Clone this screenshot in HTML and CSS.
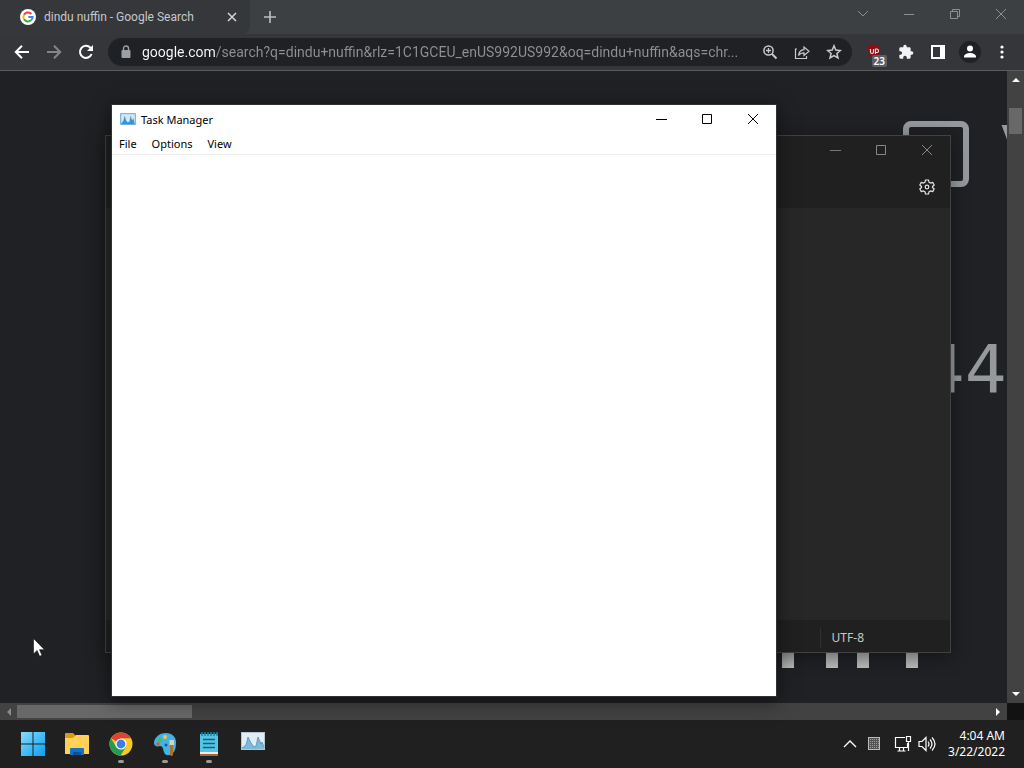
FILE: index.html
```html
<!DOCTYPE html>
<html lang="en">
<head>
<meta charset="utf-8">
<title>Desktop</title>
<link rel="stylesheet" href="styles.css">
</head>
<body>
<div class="desktop">
  <main class="browser">
    <header class="tabstrip">
      <div class="tab">
        <svg class="favicon" viewBox="0 0 48 48"><circle cx="24" cy="24" r="24" fill="#fff"/><g fill="none" stroke-width="6"><path d="M34 15A14 14 0 0 0 12 17" stroke="#ea4335"/><path d="M12 17A14 14 0 0 0 12 31" stroke="#fbbc05"/><path d="M12 31A14 14 0 0 0 33 34" stroke="#34a853"/><path d="M33 34A14 14 0 0 0 38 24H25" stroke="#4285f4"/></g></svg>
        <span class="tab-title">dindu nuffin - Google Search</span>
        <button class="icon-btn tab-close" aria-label="Close tab"><svg width="10" height="10" viewBox="0 0 10 10"><path d="M1 1l8 8M9 1L1 9" stroke="#d5d7d9" stroke-width="1.500"/></svg></button>
      </div>
      <button class="icon-btn new-tab" aria-label="New tab"><svg width="12" height="12" viewBox="0 0 12 12"><path d="M6 0v12M0 6h12" stroke="#bcbfc2" stroke-width="1.600"/></svg></button>
      <div class="caption caption-browser">
        <button class="icon-btn" aria-label="Search tabs"><svg width="12" height="12" viewBox="0 0 12 12"><path d="M1 3l5 5 5-5" fill="none" stroke="#8d9093"/></svg></button>
        <button class="icon-btn" aria-label="Minimize"><svg width="12" height="12" viewBox="0 0 12 12"><path d="M1 6.500h10" stroke="#8d9093"/></svg></button>
        <button class="icon-btn" aria-label="Restore"><svg width="12" height="12" viewBox="0 0 12 12"><path d="M1.500 3.500h7v7h-7zM3.500 3.500v-2h7v7h-2" fill="none" stroke="#8d9093"/></svg></button>
        <button class="icon-btn" aria-label="Close"><svg width="12" height="12" viewBox="0 0 12 12"><path d="M1 1l10 10M11 1L1 11" stroke="#8d9093"/></svg></button>
      </div>
    </header>
    <nav class="toolbar">
      <button class="icon-btn tool" aria-label="Back"><svg width="16" height="16" viewBox="0 0 16 16"><path d="M15 8H2M8 1.800L1.800 8 8 14.200" fill="none" stroke="#fff" stroke-width="2"/></svg></button>
      <button class="icon-btn tool" aria-label="Forward"><svg width="16" height="16" viewBox="0 0 16 16"><path d="M1 8h13M8 1.800L14.200 8 8 14.200" fill="none" stroke="#838588" stroke-width="2"/></svg></button>
      <button class="icon-btn tool" aria-label="Reload"><svg width="16" height="16" viewBox="0 0 16 16"><path d="M13.600 10A6 6 0 1 1 12.400 3.800L14 5.500" fill="none" stroke="#fff" stroke-width="2"/><path d="M15 1v6H9z" fill="#fff"/></svg></button>
      <div class="omnibox">
        <svg class="lock" width="10" height="14" viewBox="0 0 10 14"><path d="M2.500 6V3.500a2.500 2.500 0 0 1 5 0V6" fill="none" stroke="#9aa0a6" stroke-width="1.400"/><rect x="0.500" y="5" width="9" height="8" rx="1" fill="#9aa0a6"/></svg>
        <input class="url" type="text" aria-label="Address" value="google.com/search?q=dindu+nuffin&amp;rlz=1C1GCEU_enUS992US992&amp;oq=dindu+nuffin&amp;aqs=chr...">
        <button class="icon-btn omni" aria-label="Zoom"><svg width="16" height="16" viewBox="0 0 16 16"><circle cx="6.500" cy="6.500" r="4.600" fill="none" stroke="#c8cacd" stroke-width="1.500"/><path d="M10 10l4.500 4.500" stroke="#c8cacd" stroke-width="2"/><path d="M4 6.500h5M6.500 4v5" stroke="#c8cacd" stroke-width="1.300"/></svg></button>
        <button class="icon-btn omni" aria-label="Share"><svg width="16" height="16" viewBox="0 0 16 16"><path d="M3 5H1.500v9.500h11V12M4.500 11.500C5 8 7 6 10 5.700V3l5 4.200-5 4.200V8.800C7.500 8.700 6 9.500 4.500 11.500z" fill="none" stroke="#c8cacd" stroke-width="1.200"/></svg></button>
        <button class="icon-btn omni" aria-label="Bookmark"><svg width="16" height="16" viewBox="0 0 16 16"><path d="M8 1.800l1.800 4.300 4.600.4-3.500 3 1.100 4.500L8 11.600 4 14l1.100-4.500-3.500-3 4.600-.4z" fill="none" stroke="#c8cacd" stroke-width="1.500"/></svg></button>
      </div>
      <div class="extensions">
        <button class="icon-btn tool ext" aria-label="Content blocker"><svg width="14" height="16" viewBox="0 0 14 16"><path d="M7 0c2 1.500 4 2 6 2 .3 6-1 10-6 13C2 12 .7 8 1 2c2 0 4-.5 6-2z" fill="#8f0d10"/><path d="M3.500 5v3q0 1.500 1.500 1.500T6.500 8V5M8.500 10V5h1.200q1.800 0 1.800 1.800T9.700 8.500H8.500" fill="none" stroke="#ddd" stroke-width="1.200"/></svg><span class="badge">23</span></button>
        <button class="icon-btn tool" aria-label="Extensions"><svg width="16" height="16" viewBox="0 0 24 24"><path fill="#f1f3f4" d="M20.500 11H19V7a2 2 0 0 0-2-2h-4V3.500a2.500 2.500 0 0 0-5 0V5H4a2 2 0 0 0-2 2v3.800h1.500a2.700 2.700 0 0 1 0 5.400H2V20a2 2 0 0 0 2 2h3.800v-1.500a2.700 2.700 0 0 1 5.400 0V22H17a2 2 0 0 0 2-2v-4h1.500a2.500 2.500 0 0 0 0-5z"/></svg></button>
        <button class="icon-btn tool" aria-label="Side panel"><svg width="14" height="14" viewBox="0 0 14 14"><path d="M1 1h12v12H1z" fill="none" stroke="#fff" stroke-width="2"/><path d="M9 0h5v14H9z" fill="#fff"/></svg></button>
        <button class="icon-btn tool" aria-label="Profile"><svg width="22" height="22" viewBox="0 0 22 22"><circle cx="11" cy="11" r="11" fill="#202124"/><circle cx="11" cy="7.500" r="3" fill="#fff"/><path d="M5 16.500v-1c0-2 3.500-3.500 6-3.500s6 1.500 6 3.500v1z" fill="#fff"/></svg></button>
        <button class="icon-btn tool" aria-label="Menu"><svg width="4" height="14" viewBox="0 0 4 14" fill="#fff"><circle cx="2" cy="2" r="1.600"/><circle cx="2" cy="7" r="1.600"/><circle cx="2" cy="12" r="1.600"/></svg></button>
      </div>
    </nav>
    <section class="viewport">
      <div class="page">
        <div class="frame-shape"></div>
        <span class="big verify">V</span>
        <span class="big digits">44</span>
        <div class="stems"><i></i><i></i><i></i><i></i></div>
      </div>
      <div class="scroll-v"><svg width="8" height="4" viewBox="0 0 8 4"><path d="M0 4l4-4 4 4z" fill="#fff"/></svg><div class="thumb-v"></div><svg class="down" width="8" height="4" viewBox="0 0 8 4"><path d="M0 0l4 4 4-4z" fill="#fff"/></svg></div>
      <div class="scroll-h"><svg width="4" height="8" viewBox="0 0 4 8"><path d="M4 0L0 4l4 4z" fill="#8a8a8a"/></svg><div class="thumb-h"></div><svg class="right" width="4" height="8" viewBox="0 0 4 8"><path d="M0 0l4 4-4 4z" fill="#fff"/></svg></div>
      <div class="corner"></div>
    </section>
  </main>

  <section class="window notepad" aria-label="Notepad">
    <div class="notepad-head">
      <div class="caption">
        <button class="icon-btn" aria-label="Minimize"><svg width="12" height="12" viewBox="0 0 12 12"><path d="M1 6.500h11" stroke="#777"/></svg></button>
        <button class="icon-btn" aria-label="Maximize"><svg width="12" height="12" viewBox="0 0 12 12"><path d="M1.500 1.500h9v9h-9z" fill="none" stroke="#888"/></svg></button>
        <button class="icon-btn" aria-label="Close"><svg width="12" height="12" viewBox="0 0 12 12"><path d="M1 1l10 10M11 1L1 11" stroke="#888"/></svg></button>
      </div>
      <button class="icon-btn settings" aria-label="Settings"><svg width="16" height="16" viewBox="0 0 16 16" fill="none" stroke="#e4e4e4" stroke-width="1.200" stroke-linejoin="round"><path d="M6.500 1h3l.5 2.200 1.500.9 2.200-.7 1.500 2.600L13.500 7.500v1l1.700 1.500-1.500 2.600-2.200-.7-1.500.9L9.500 15h-3L6 12.800l-1.500-.9-2.200.7L.8 10l1.700-1.500v-1L.8 6l1.500-2.600 2.200.7L6 3.200z"/><circle cx="8" cy="8" r="1.800"/></svg></button>
    </div>
    <div class="notepad-text"></div>
    <footer class="notepad-status"><span>UTF-8</span></footer>
  </section>

  <section class="window taskmgr" aria-label="Task Manager">
    <header class="titlebar">
      <svg class="app-icon" width="16" height="12" viewBox="0 0 24 18"><rect x="1" y="1" width="22" height="16" fill="#cfe8fa" stroke="#6fa9d8" stroke-width="1.500"/><path d="M2 15l3-3 2-8 2 7 2 3 3-1 2-9 2 7 2-3 2 8v1H2z" fill="#3d92d3"/></svg>
      <h1>Task Manager</h1>
      <div class="caption">
        <button class="icon-btn" aria-label="Minimize"><svg width="12" height="12" viewBox="0 0 12 12"><path d="M1 6.500h11" stroke="#000"/></svg></button>
        <button class="icon-btn" aria-label="Maximize"><svg width="12" height="12" viewBox="0 0 12 12"><path d="M1.500 1.500h9v9h-9z" fill="none" stroke="#000"/></svg></button>
        <button class="icon-btn" aria-label="Close"><svg width="12" height="12" viewBox="0 0 12 12"><path d="M1 1l10 10M11 1L1 11" stroke="#000"/></svg></button>
      </div>
    </header>
    <nav class="menubar"><button>File</button><button>Options</button><button>View</button></nav>
  </section>

  <footer class="taskbar">
    <div class="apps">
      <button class="icon-btn app" aria-label="Start"><svg width="24" height="24" viewBox="0 0 24 24"><defs><linearGradient id="win" x1="0" y1="0" x2="1" y2="1"><stop offset="0" stop-color="#83dcff"/><stop offset="1" stop-color="#0c9fee"/></linearGradient></defs><path d="M0 0h11.500v11.500H0zM12.500 0H24v11.500H12.500zM0 12.500h11.500V24H0zM12.500 12.500H24V24H12.500z" fill="url(#win)"/></svg></button>
      <button class="icon-btn app" aria-label="File Explorer"><svg width="26" height="24" viewBox="0 0 26 24"><path d="M1 2q0-1 1-1h7l3 3v4H1z" fill="#dc9a13"/><path d="M1 6h8l3-3h12q1 0 1 1v18H1z" fill="#ffd257"/><path d="M6 23v-6q0-1 1-1h12q1 0 1 1v6z" fill="#1770c0"/><path d="M9 23v-3h8v3z" fill="#0b4f95"/></svg></button>
      <button class="icon-btn app running" aria-label="Chrome"><svg width="24" height="24" viewBox="0 0 24 24"><circle cx="12" cy="12" r="11.500" fill="#f8c920"/><path d="M12 12L2 6.300A11.500 11.500 0 0 1 22 6.300H12z" fill="#dc4437"/><path d="M2 6.300A11.500 11.500 0 0 0 11.500 23.500L17 14.800 12 12 7 14.800z" fill="#269b50"/><circle cx="12" cy="12" r="5.600" fill="#fff"/><circle cx="12" cy="12" r="4.400" fill="#3c7ee8"/></svg></button>
      <button class="icon-btn app running" aria-label="Paint"><svg width="24" height="24" viewBox="0 0 24 24"><path d="M13 1C6 1 1 6 1 11c0 3 3 4 6 3 3 0 3 3 4 6 1 4 5 4 8 2 4-3 4-9 4-12 0-5-4-9-10-9z" fill="#43b3e4"/><circle cx="12" cy="5" r="2" fill="#f3c545"/><circle cx="7" cy="8" r="2" fill="#53b947"/><circle cx="5" cy="12" r="1.800" fill="#dc563c"/><circle cx="13" cy="13" r="1.500" fill="#155c91"/><path d="M17 13h3v10q-1.500 2-3 0z" fill="#b06f2e"/><path d="M16.500 8h4.500v5h-4.500z" fill="#d9d2bd"/></svg></button>
      <button class="icon-btn app running" aria-label="Notepad"><svg width="20" height="24" viewBox="0 0 20 24"><rect x="1" y="2" width="18" height="20" fill="#56c4e4"/><path d="M1 21h18v3H1z" fill="#a8662c"/><path d="M1 20h18v2H1z" fill="#e8eef0"/><path d="M4 7.500h12M4 11.500h12M4 15.500h12" stroke="#0c6285" stroke-width="1.600"/><path d="M3 0v4M6 0v4M9 0v4M12 0v4M15 0v4M18 0v4" stroke="#1687a9" stroke-width="1.500"/></svg></button>
      <button class="icon-btn app raised" aria-label="Task Manager"><svg width="24" height="18" viewBox="0 0 24 18"><rect x=".5" y=".5" width="23" height="17" fill="#e1edf4" stroke="#b9c6ce"/><path d="M1 16l4-3 2-8 3 6 3 4 2-1 2-9 3 7 1-2 2 5v2H1z" fill="#7db9d8"/><path d="M1 16l4-3 2-8 3 6 3 4 2-1 2-9 3 7 1-2 2 5" fill="none" stroke="#3f8bb5" stroke-width=".7"/></svg></button>
    </div>
    <div class="tray">
      <button class="icon-btn" aria-label="Hidden icons"><svg width="14" height="8" viewBox="0 0 14 8"><path d="M1 7l6-6 6 6" fill="none" stroke="#fff" stroke-width="1.400"/></svg></button>
      <button class="icon-btn tray-grid" aria-label="Tray app"><svg width="12" height="14" viewBox="0 0 12 14"><defs><pattern id="dots" width="2" height="2" patternUnits="userSpaceOnUse"><path d="M0 0h2v2H0z" fill="#555"/><path d="M0 0h1v1H0z" fill="#999"/></pattern></defs><rect x=".5" y=".5" width="11" height="12" fill="url(#dots)" stroke="#bbb"/></svg></button>
      <button class="icon-btn" aria-label="Network"><svg width="18" height="18" viewBox="0 0 18 18" fill="none" stroke="#fff" stroke-width="1.200"><path d="M11 2.500H1.500v10h12V8M5.500 13v3M9.500 13v3M3.500 16h8M12.500 1.500h4v5h-4zM14.500 6.500V16"/></svg></button>
      <button class="icon-btn tray-volume" aria-label="Volume"><svg width="18" height="16" viewBox="0 0 18 16" fill="none" stroke="#fff" stroke-width="1.200"><path d="M1 5.500h3l4-4v13l-4-4H1zM10 5.500q2 2.500 0 5M12 3.500q4 4.500 0 9M14 1.500q6 6.500 0 13"/></svg></button>
      <button class="clock"><span>4:04 AM</span><span>3/22/2022</span></button>
    </div>
  </footer>
  <svg class="cursor" width="12" height="19" viewBox="0 0 12 19"><path d="M.5.500v15.500l3.600-3.500 2.500 5.800 2.400-1-2.500-5.600h5z" fill="#fff" stroke="#111" stroke-width=".6"/></svg>
</div>
</body>
</html>
```
FILE: styles.css
```css
* { box-sizing: border-box; }
body { margin: 0; font-family: "Noto Sans", "Open Sans", sans-serif; font-size: 12px; }
svg { display: block; flex: none; }
button { font: inherit; color: inherit; border: 0; background: none; padding: 0; }
.icon-btn { display: flex; align-items: center; justify-content: center; flex: none; }
.desktop { position: relative; height: 100vh; display: flex; flex-direction: column; overflow: hidden; background: #202124; }

.browser { flex: 1; display: flex; flex-direction: column; min-height: 0; }
.tabstrip { height: 34px; display: flex; align-items: center; background: #3c4043; }
.tab { width: 250px; height: 34px; display: flex; align-items: center; padding: 0 12px 0 20px; background: #36373b; border-radius: 0 0 8px 0; }
.favicon { width: 16px; height: 16px; margin-right: 8px; }
.tab-title { flex: 1; color: #c6c8cb; font: 12px Roboto, "Noto Sans", sans-serif; white-space: nowrap; }
.tab-close { width: 12px; height: 16px; }
.new-tab { width: 40px; height: 34px; }
.caption { display: flex; margin-left: auto; }
.caption .icon-btn { width: 46px; height: 28px; }
.caption-browser { align-self: flex-start; }
.toolbar { height: 37px; display: flex; align-items: center; padding: 0 6px; background: #35363a; border-bottom: 1px solid #5b5c5f; }
.tool { width: 32px; height: 32px; }
.omnibox { flex: 1; min-width: 0; height: 28px; display: flex; align-items: center; margin-left: 6px; padding: 0 2px 0 13px; border-radius: 14px; background: #202124; }
.lock { margin-right: 11px; }
.url { flex: 1; min-width: 0; height: 24px; padding: 0; border: 0; font: 14px Roboto, "Noto Sans", sans-serif; color: transparent; background: linear-gradient(90deg, #fff 73px, #8e9195 73px); background-clip: text; }
.omni { width: 32px; height: 28px; }
.extensions { display: flex; margin-left: 6px; }
.ext { position: relative; }
.badge { position: absolute; right: 3px; bottom: 1px; padding: 0 2px; border-radius: 2px; background: #5c5e66; color: #fff; font-size: 10px; font-weight: 600; line-height: 12px; }

.viewport { flex: 1; min-height: 0; display: grid; grid-template-columns: 1fr 17px; grid-template-rows: 1fr 17px; }
.page { position: relative; overflow: hidden; background: #202124; }
.frame-shape { position: absolute; left: 903px; top: 50px; width: 66px; height: 66px; border: 6px solid #969a9e; border-radius: 8px; }
.big { position: absolute; font: 66px/66px "DejaVu Sans", sans-serif; color: #96999c; }
.verify { left: 1001px; top: 47px; }
.digits { left: 923px; top: 266px; }
.stems { position: absolute; left: 782px; top: 560px; display: flex; }
.stems i { width: 12px; height: 37px; background: linear-gradient(#888, #bbb); }
.stems i:nth-child(2) { margin-left: 32px; }
.stems i:nth-child(3) { margin-left: 19px; }
.stems i:nth-child(4) { margin-left: 37px; }
.scroll-v { display: flex; flex-direction: column; align-items: center; padding: 7px 0; background: #424242; }
.thumb-v { width: 13px; height: 26px; margin-top: 26px; background: #686868; }
.down { margin-top: auto; }
.scroll-h { display: flex; align-items: center; padding: 0 7px; background: #424242; }
.thumb-h { width: 175px; height: 13px; margin-left: 6px; background: #686868; }
.right { margin-left: auto; }
.corner { background: #121212; }

.window { position: absolute; display: flex; flex-direction: column; }
.notepad { left: 105px; top: 135px; width: 846px; height: 518px; background: #272727; border: 1px solid #414141; box-shadow: 0 3px 18px rgba(0, 0, 0, .4); }
.notepad-head { height: 72px; display: flex; flex-direction: column; background: #202020; }
.settings { align-self: flex-end; width: 46px; height: 46px; }
.notepad-text { flex: 1; }
.notepad-status { height: 32px; padding: 4px 86px 0 0; display: flex; align-items: center; justify-content: flex-end; background: #202020; color: #c8c8c8; }
.notepad-status span { padding-left: 11px; line-height: 20px; border-left: 1px solid #303030; }
.taskmgr { left: 111px; top: 104px; width: 666px; height: 593px; background: #fff; border: 1px solid #303134; box-shadow: 0 4px 18px rgba(0, 0, 0, .5); color: #000; font-size: 11px; }
.titlebar { height: 28px; display: flex; align-items: center; padding-left: 8px; }
.titlebar h1 { margin: 0 0 0 5px; font-size: 11px; font-weight: 400; }
.menubar { height: 22px; display: flex; align-items: center; gap: 15px; padding: 0 7px; border-bottom: 1px solid #ededed; }

.taskbar { height: 48px; display: flex; align-items: center; background: #202020; color: #fff; }
.apps { display: flex; height: 48px; padding-left: 11px; }
.app { width: 44px; height: 48px; }
.running { position: relative; }
.running::after { content: ""; position: absolute; left: 19px; bottom: 5px; width: 6px; height: 3px; border-radius: 2px; background: #9a9a9a; }
.raised { padding-bottom: 7px; }
.tray { display: flex; align-items: center; margin-left: auto; padding-right: 19px; }
.tray-grid { margin: 0 14px 0 11px; }
.tray-volume { margin: 0 12px 0 6px; }
.clock { display: flex; flex-direction: column; align-items: flex-end; font-size: 12px; line-height: 16px; }
.cursor { position: absolute; left: 33px; top: 638px; }
```
